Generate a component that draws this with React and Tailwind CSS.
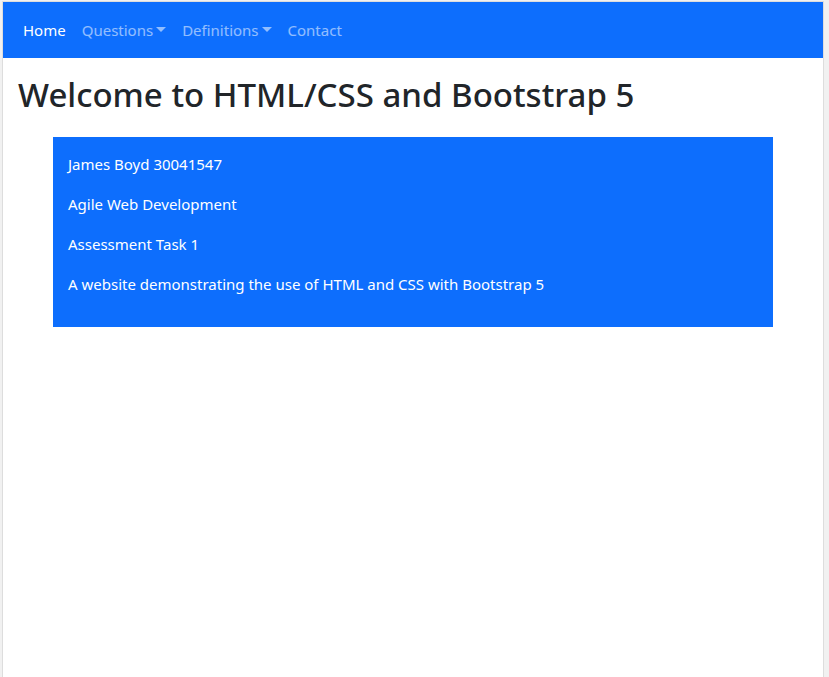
const lines = [
  'James Boyd 30041547',
  'Agile Web Development',
  'Assessment Task 1',
  'A website demonstrating the use of HTML and CSS with Bootstrap 5',
];

function Caret() {
  return (
    <span className="ml-[3px] inline-block border-x-[5px] border-t-[5px] border-x-transparent border-t-current align-[4px]" />
  );
}

function NavDropdown({ label }) {
  return (
    <button type="button" aria-haspopup="true" className="px-2 py-2 text-white/55 hover:text-white/75">
      {label}
      <Caret />
    </button>
  );
}

export default function App() {
  return (
    <div className="min-h-screen bg-[#f1f1f1] pt-px pr-[5px] pl-[2px] font-['Noto_Sans','Open_Sans',sans-serif] text-[15px] leading-6 text-[#212529]">
      <div className="min-h-[calc(100vh-1px)] border-x border-t border-[#dddddd] bg-white">
        <nav className="flex items-center bg-[#0d6efd] px-3 py-2 whitespace-nowrap">
          <a href="#home" aria-current="page" className="px-2 py-2 text-white">Home</a>
          <NavDropdown label="Questions" />
          <NavDropdown label="Definitions" />
          <a href="#contact" className="px-2 py-2 text-white/55 hover:text-white/75">Contact</a>
        </nav>
        <main className="px-[15px] pt-[15px]">
          <h1 className="text-[33px] leading-[44px] font-medium">Welcome to HTML/CSS and Bootstrap 5</h1>
          <section className="mx-[35px] mt-5 flex flex-col gap-4 bg-[#0d6efd] px-[15px] pt-[15px] pb-[31px] text-white">
            {lines.map((line) => (
              <p key={line}>{line}</p>
            ))}
          </section>
        </main>
      </div>
    </div>
  );
}
